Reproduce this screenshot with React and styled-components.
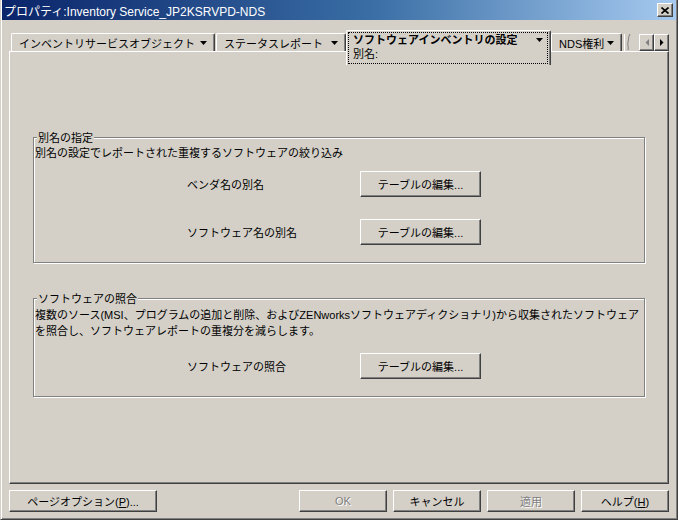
import React from "react";
import styled, { createGlobalStyle } from "styled-components";

const GlobalStyle = createGlobalStyle`
  html, body { margin: 0; padding: 0; background: #d4d0c8; }
  body { font-family: "Liberation Sans", "Noto Sans CJK JP", sans-serif; font-size: 11px; color: #000; }
  * { box-sizing: border-box; }
`;

const Window = styled.div`
  width: 678px;
  height: 520px;
  display: flex;
  flex-direction: column;
  background: #d4d0c8;
  border: 1px solid;
  border-top: 0;
  border-color: #d4d0c8 #404040 #404040 #d4d0c8;
  box-shadow: inset 1px 0 #fff, inset -1px -1px #808080;
  padding: 0 1px 1px 1px;
`;

const TitleBar = styled.div`
  height: 20px;
  flex: none;
  display: flex;
  align-items: center;
  justify-content: space-between;
  padding: 0 3px 0 2px;
  background: linear-gradient(to right, #0a246a 0%, #3a6ea5 55%, #a6caf0 100%);
  color: #fff;
  font-size: 12px;
`;

const CloseButton = styled.div`
  width: 16px;
  height: 14px;
  display: flex;
  align-items: center;
  justify-content: center;
  background: #d4d0c8;
  border: 1px solid;
  border-color: #fff #404040 #404040 #fff;
  box-shadow: inset -1px -1px #808080;
`;

const Body = styled.div`
  flex: 1;
  display: flex;
  flex-direction: column;
  padding: 10px 7px 0 7px;
`;

const TabStrip = styled.div`
  height: 21px;
  flex: none;
  display: flex;
  align-items: flex-end;
  padding-left: 2px;
`;

const Tab = styled.div`
  width: ${(p) => p.$w}px;
  height: 18px;
  margin-right: ${(p) => p.$mr || 0}px;
  display: flex;
  align-items: center;
  justify-content: space-between;
  padding: 0 7px 0 7px;
  background: #d4d0c8;
  border-top: 1px solid #fff;
  border-left: 1px solid #fff;
  border-right: 1px solid #404040;
  box-shadow: inset -1px 0 #808080;
  border-top-left-radius: 2px;
  border-top-right-radius: 2px;
  white-space: nowrap;
`;

const ActiveTab = styled.div`
  width: ${(p) => p.$w}px;
  height: 35px;
  margin-bottom: -14px;
  position: relative;
  z-index: 1;
  background: #d4d0c8;
  border-top: 1px solid #fff;
  border-left: 1px solid #fff;
  border-right: 1px solid #404040;
  box-shadow: inset -1px 0 #808080;
  border-top-left-radius: 2px;
  border-top-right-radius: 2px;
  padding: 1px 2px 1px 1px;
  display: flex;
`;

const FocusRect = styled.div`
  flex: 1;
  border: 1px dotted #000;
  padding: 0 4px;
  display: flex;
  flex-direction: column;
  white-space: nowrap;
`;

const TabLine = styled.div`
  height: 14px;
  line-height: 14px;
  display: flex;
  align-items: center;
  justify-content: space-between;
  font-weight: ${(p) => (p.$bold ? 700 : 400)};
`;

const ClipMark = styled.div`
  width: 12px;
  height: 18px;
  margin-left: 1px;
  display: flex;
`;

const ScrollGroup = styled.div`
  margin-left: auto;
  display: flex;
  align-self: flex-end;
`;

const ScrollButton = styled.div`
  width: 15px;
  height: 17px;
  display: flex;
  align-items: center;
  justify-content: center;
  background: #d4d0c8;
  border: 1px solid;
  border-color: #fff #404040 #404040 #fff;
  box-shadow: inset -1px -1px #808080;
`;

const Panel = styled.div`
  flex: 1;
  background: #d4d0c8;
  border: 1px solid;
  border-color: #fff #404040 #404040 #fff;
  box-shadow: inset -1px -1px #808080;
  padding: 85px 23px 0 23px;
`;

const Group = styled.div`
  position: relative;
  border: 1px solid #808080;
  box-shadow: inset 1px 1px #fff, 1px 1px #fff;
  padding: ${(p) => p.$pt}px 0 17px 0;
  margin-top: ${(p) => p.$mt || 0}px;
`;

const Legend = styled.span`
  position: absolute;
  top: -8px;
  left: 3px;
  padding: 0 1px;
  line-height: 16px;
  background: #d4d0c8;
  white-space: nowrap;
`;

const Desc = styled.div`
  padding-left: 1px;
  line-height: 16px;
  white-space: nowrap;
  margin-bottom: ${(p) => p.$mb}px;
`;

const Row = styled.div`
  display: grid;
  grid-template-columns: 173px 121px;
  align-items: center;
  padding-left: 153px;
  margin-top: ${(p) => p.$mt || 0}px;
`;

const Label = styled.span`
  white-space: nowrap;
`;

const Button = styled.button`
  width: ${(p) => p.$w}px;
  height: ${(p) => p.$h || 22}px;
  padding: 0;
  margin: 0;
  font: inherit;
  font-size: 11px;
  color: ${(p) => (p.disabled ? "#808080" : "#000")};
  text-shadow: ${(p) => (p.disabled ? "1px 1px 0 #fff" : "none")};
  background: #d4d0c8;
  border: 1px solid;
  border-color: #fff #404040 #404040 #fff;
  box-shadow: inset -1px -1px #808080;
  border-radius: 0;
  white-space: nowrap;
`;

const Footer = styled.div`
  flex: none;
  display: flex;
  justify-content: space-between;
  padding: 6px 0 6px 0;
`;

const ButtonGroup = styled.div`
  display: flex;
  gap: 6px;
`;

const DownArrow = () => (
  <svg width="7" height="4" viewBox="0 0 7 4">
    <path d="M0 0H7L3.5 4Z" fill="#000" />
  </svg>
);

const Edit = () => <Button $w={121} $h={26}>テーブルの編集...</Button>;

export default function App() {
  return (
    <>
      <GlobalStyle />
      <Window>
        <TitleBar>
          <span>プロパティ:Inventory Service_JP2KSRVPD-NDS</span>
          <CloseButton>
            <svg width="8" height="7" viewBox="0 0 8 7">
              <path d="M0.5 0.5L7.5 6.5M7.5 0.5L0.5 6.5" stroke="#000" strokeWidth="1.6" />
            </svg>
          </CloseButton>
        </TitleBar>
        <Body>
          <TabStrip>
            <Tab $w={204} $mr={1}>
              <span>インベントリサービスオブジェクト</span>
              <DownArrow />
            </Tab>
            <Tab $w={130}>
              <span>ステータスレポート</span>
              <DownArrow />
            </Tab>
            <ActiveTab $w={205}>
              <FocusRect>
                <TabLine $bold>
                  <span>ソフトウェアインベントリの設定</span>
                  <DownArrow />
                </TabLine>
                <TabLine>
                  <span>別名:</span>
                </TabLine>
              </FocusRect>
            </ActiveTab>
            <Tab $w={71}>
              <span>NDS権利</span>
              <DownArrow />
            </Tab>
            <ClipMark>
              <svg width="12" height="18" viewBox="0 0 12 18">
                <path d="M1.5 1V18" stroke="#fff" strokeWidth="1" />
                <path d="M7 1C5 4 6 6 5 9C4 12 6 14 5 17" stroke="#808080" strokeWidth="1" fill="none" />
              </svg>
            </ClipMark>
            <ScrollGroup>
              <ScrollButton>
                <svg width="4" height="7" viewBox="0 0 4 7">
                  <path d="M4 0V7L0.5 3.5Z" fill="#808080" />
                </svg>
              </ScrollButton>
              <ScrollButton>
                <svg width="4" height="7" viewBox="0 0 4 7">
                  <path d="M0 0V7L3.5 3.5Z" fill="#000" />
                </svg>
              </ScrollButton>
            </ScrollGroup>
          </TabStrip>
          <Panel>
            <Group $pt={7}>
              <Legend>別名の指定</Legend>
              <Desc $mb={10}>別名の設定でレポートされた重複するソフトウェアの絞り込み</Desc>
              <Row>
                <Label>ベンダ名の別名</Label>
                <Edit />
              </Row>
              <Row $mt={22}>
                <Label>ソフトウェア名の別名</Label>
                <Edit />
              </Row>
            </Group>
            <Group $pt={8} $mt={35}>
              <Legend>ソフトウェアの照合</Legend>
              <Desc $mb={14}>
                複数のソース(MSI、プログラムの追加と削除、およびZENworksソフトウェアディクショナリ)から収集されたソフトウェア
                <br />
                を照合し、ソフトウェアレポートの重複分を減らします。
              </Desc>
              <Row>
                <Label>ソフトウェアの照合</Label>
                <Edit />
              </Row>
            </Group>
          </Panel>
          <Footer>
            <Button $w={148}>
              ページオプション(<u>P</u>)...
            </Button>
            <ButtonGroup>
              <Button $w={88} disabled>OK</Button>
              <Button $w={88}>キャンセル</Button>
              <Button $w={88} disabled>適用</Button>
              <Button $w={88}>
                ヘルプ(<u>H</u>)
              </Button>
            </ButtonGroup>
          </Footer>
        </Body>
      </Window>
    </>
  );
}
